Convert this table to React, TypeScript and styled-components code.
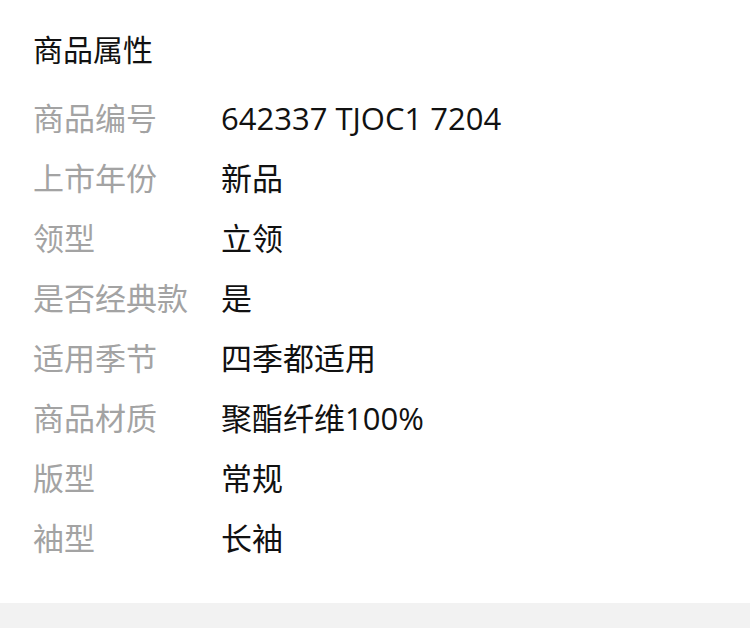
import React from "react";
import styled, { createGlobalStyle } from "styled-components";

const GlobalStyle = createGlobalStyle`
  html, body {
    margin: 0;
    padding: 0;
    background: #f2f2f2;
  }
  body {
    font-family: "Open Sans", "Noto Sans CJK SC", sans-serif;
  }
`;

const Page = styled.div`
  width: 750px;
  min-height: 628px;
  background: #f2f2f2;
`;

const Section = styled.section`
  background: #fff;
  padding: 20px 0 35px 33px;
`;

const Title = styled.h2`
  margin: 0 0 8px;
  height: 60px;
  line-height: 60px;
  font-size: 30px;
  font-weight: 400;
  color: #111;
`;

const Row = styled.div`
  display: grid;
  grid-template-columns: 188px 1fr;
  align-items: center;
  height: 60px;
  line-height: 60px;
  font-size: 31px;
`;

const Label = styled.span`
  color: #a3a3a3;
`;

const Value = styled.span`
  color: #111;
`;

const attrs: [string, string][] = [
  ["商品编号", "642337 TJOC1 7204"],
  ["上市年份", "新品"],
  ["领型", "立领"],
  ["是否经典款", "是"],
  ["适用季节", "四季都适用"],
  ["商品材质", "聚酯纤维100%"],
  ["版型", "常规"],
  ["袖型", "长袖"],
];

const App = () => (
  <Page>
    <GlobalStyle />
    <Section>
      <Title>商品属性</Title>
      {attrs.map(([k, v]) => (
        <Row key={k}>
          <Label>{k}</Label>
          <Value>{v}</Value>
        </Row>
      ))}
    </Section>
  </Page>
);

export default App;
